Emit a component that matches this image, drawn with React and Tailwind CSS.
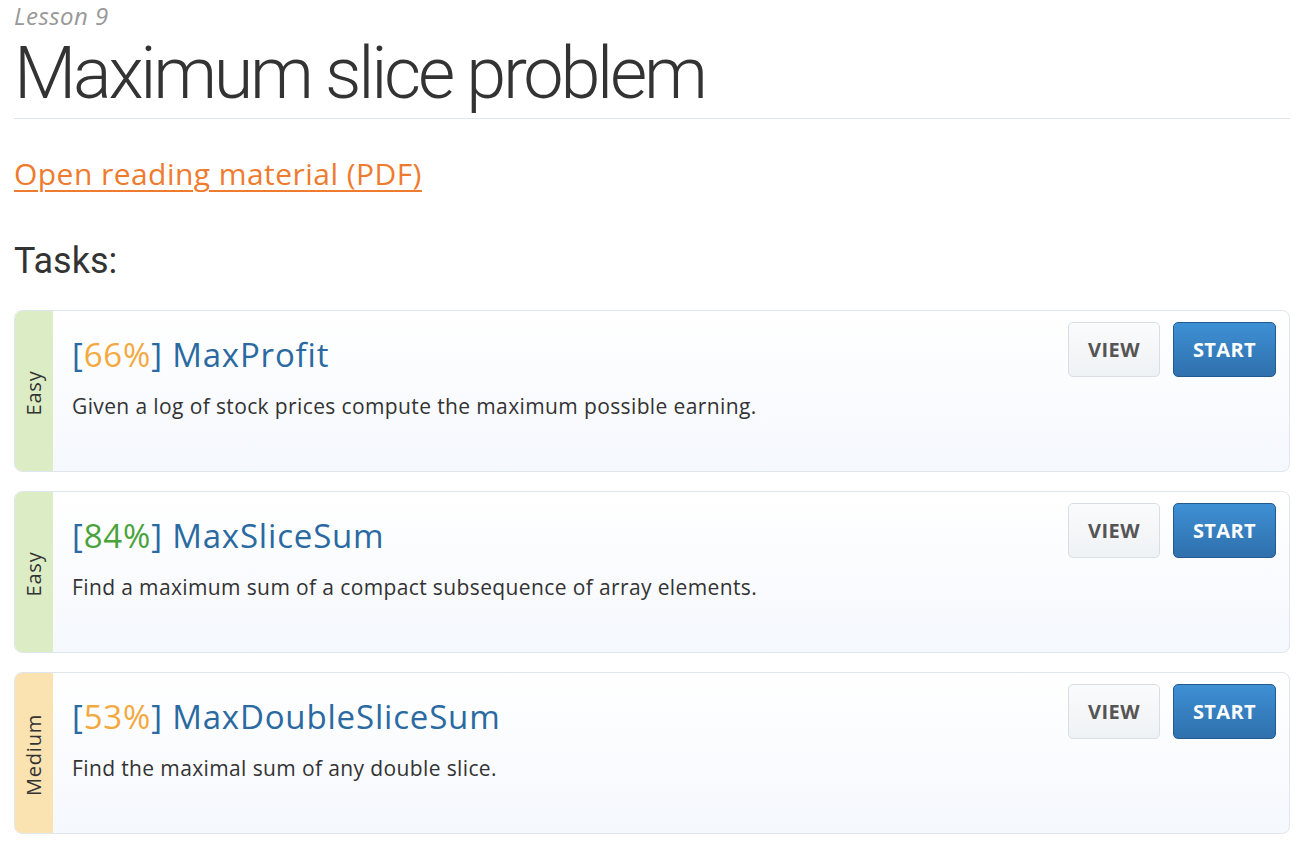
import React from 'react';

const tasks = [
  {
    level: 'Easy',
    score: 66,
    name: 'MaxProfit',
    desc: 'Given a log of stock prices compute the maximum possible earning.',
  },
  {
    level: 'Easy',
    score: 84,
    name: 'MaxSliceSum',
    desc: 'Find a maximum sum of a compact subsequence of array elements.',
  },
  {
    level: 'Medium',
    score: 53,
    name: 'MaxDoubleSliceSum',
    desc: 'Find the maximal sum of any double slice.',
  },
];

const TaskCard = ({ task }) => {
  const strip = task.level === 'Easy' ? 'bg-[#dcedc6]' : 'bg-[#fae3b1]';
  const scoreColor = task.score >= 75 ? 'text-[#4aa33a]' : 'text-[#f3a93f]';

  return (
    <div className="flex h-[162px] rounded-lg border border-[#dfe6ee] overflow-hidden bg-gradient-to-b from-white to-[#f5f8fd]">
      <div className={`w-[38px] shrink-0 flex items-center justify-center pt-[4px] ${strip}`}>
        <span className="-rotate-90 whitespace-nowrap text-[20px] tracking-[0.04em] text-[#333]">{task.level}</span>
      </div>
      <div className="flex-1 flex pl-[19px] pr-[13px] pt-[11px]">
        <div className="flex-1 pt-[13px]">
          <div className="text-[33px] leading-[40px] tracking-[0.025em] text-[#2a6aa1]">
            [<span className={scoreColor}>{task.score}%</span>] {task.name}
          </div>
          <div className="mt-[17px] text-[21px] leading-[28px] tracking-[0.018em] text-[#333]">{task.desc}</div>
        </div>
        <div className="flex gap-[13px] items-start">
          <button className="w-[92px] h-[55px] rounded-[5px] border border-[#d8dee4] bg-gradient-to-b from-[#fafbfc] to-[#eff2f5] text-[20px] tracking-[0.02em] font-bold text-[#555]">
            VIEW
          </button>
          <button className="w-[103px] h-[55px] rounded-[5px] border border-[#245a8e] bg-gradient-to-b from-[#3e90d4] to-[#2f70ad] text-[20px] tracking-[0.02em] font-bold text-white">
            START
          </button>
        </div>
      </div>
    </div>
  );
};

export default function App() {
  return (
    <div className="min-h-screen bg-white px-[14px] pb-4 font-['Open_Sans',sans-serif]">
      <div className="pt-[1px] text-[24px] leading-[30px] italic tracking-[0.02em] text-[#999]">Lesson 9</div>
      <h1 className="font-['Roboto',sans-serif] font-light text-[72px] leading-[80px] tracking-[-0.045em] text-[#333] mt-[3px]">
        Maximum slice problem
      </h1>
      <div className="mt-[4px] border-t border-[#dde6ee]" />
      <div className="mt-[36px]">
        <a href="#" className="text-[30px] leading-[38px] tracking-[0.015em] text-[#ef7b2f] underline underline-offset-[5px] decoration-[1.5px]">
          Open reading material (PDF)
        </a>
      </div>
      <h2 className="mt-[46px] font-['Roboto',sans-serif] text-[36px] leading-[44px] text-[#333]">Tasks:</h2>
      <div className="mt-[27px] flex flex-col gap-[19px]">
        {tasks.map((t) => (
          <TaskCard key={t.name} task={t} />
        ))}
      </div>
    </div>
  );
}
